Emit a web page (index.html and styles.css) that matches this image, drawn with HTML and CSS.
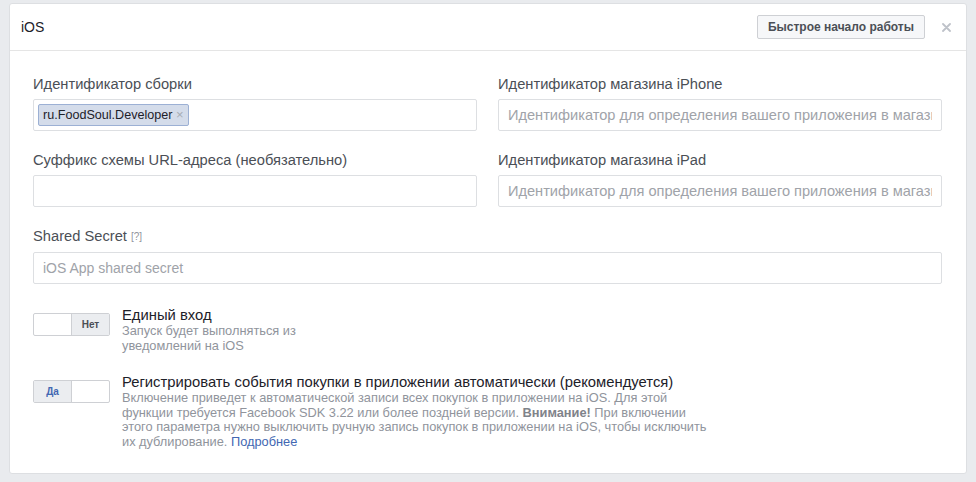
FILE: index.html
```html
<!DOCTYPE html>
<html lang="ru">
<head>
    <meta charset="UTF-8">
    <meta name="viewport" content="width=device-width, initial-scale=1.0">
    <title>iOS</title>
    <link rel="stylesheet" href="styles.css">
</head>
<body>

    <div class="card">
        <div class="card-header">
            <span class="card-title">iOS</span>
            <button class="btn">Быстрое начало работы</button>
            <span class="close">
                <svg width="9" height="9" viewBox="0 0 9 9">
                    <path d="M1 1 L8 8 M8 1 L1 8" stroke="#bec2c9" stroke-width="1.8" stroke-linecap="round"/>
                </svg>
            </span>
        </div>

        <div class="card-body">
            <div class="grid">
                <div class="field">
                    <label class="label">Идентификатор сборки</label>
                    <div class="input tags">
                        <span class="tag">ru.FoodSoul.Developer <span class="tag-x">×</span></span>
                    </div>
                </div>
                <div class="field">
                    <label class="label">Идентификатор магазина iPhone</label>
                    <input class="input" type="text" placeholder="Идентификатор для определения вашего приложения в магазине App Store">
                </div>
                <div class="field">
                    <label class="label">Суффикс схемы URL-адреса (необязательно)</label>
                    <input class="input" type="text">
                </div>
                <div class="field">
                    <label class="label">Идентификатор магазина iPad</label>
                    <input class="input" type="text" placeholder="Идентификатор для определения вашего приложения в магазине App Store">
                </div>
                <div class="field wide">
                    <label class="label">Shared Secret <span class="help">[?]</span></label>
                    <input class="input latin" type="text" placeholder="iOS App shared secret">
                </div>
            </div>

            <div class="option">
                <div class="toggle">
                    <span class="toggle-half"></span>
                    <span class="toggle-half on">Нет</span>
                </div>
                <div class="option-text short">
                    <div class="option-title">Единый вход</div>
                    <div class="option-desc">Запуск будет выполняться из уведомлений на iOS</div>
                </div>
            </div>

            <div class="option">
                <div class="toggle">
                    <span class="toggle-half on yes">Да</span>
                    <span class="toggle-half"></span>
                </div>
                <div class="option-text">
                    <div class="option-title">Регистрировать события покупки в приложении автоматически (рекомендуется)</div>
                    <div class="option-desc">Включение приведет к автоматической записи всех покупок в приложении на iOS. Для этой функции требуется Facebook SDK 3.22 или более поздней версии. <b>Внимание!</b> При включении этого параметра нужно выключить ручную запись покупок в приложении на iOS, чтобы исключить их дублирование. <a href="#">Подробнее</a></div>
                </div>
            </div>
        </div>
    </div>

</body>
</html>
```

FILE: styles.css
```css
body {
    margin: 0;
    padding: 3px 9px 9px;
    background: #e9ebee;
    font-family: "Liberation Sans", Arial, sans-serif;
    color: #1d2129;
}
.card {
    background: #fff;
    border: 1px solid #dddfe2;
    border-radius: 3px;
}
.card-header {
    display: flex;
    align-items: center;
    height: 46px;
    padding: 0 15px 0 11px;
    border-bottom: 1px solid #e5e5e5;
}
.card-title {
    flex: 1;
    font-size: 14px;
}
.btn {
    height: 24px;
    padding: 0 10px;
    font-family: inherit;
    font-size: 12px;
    font-weight: bold;
    color: #4b4f56;
    background: #f6f7f9;
    border: 1px solid #ced0d4;
    border-radius: 2px;
}
.close {
    display: flex;
    margin-left: 17px;
}
.card-body {
    padding: 24px 24px 24px 23px;
}
.grid {
    display: grid;
    grid-template-columns: 1fr 1fr;
    column-gap: 21px;
    row-gap: 20px;
}
.wide {
    grid-column: 1 / 3;
}
.label {
    display: block;
    font-size: 14.7px;
    line-height: 18px;
    color: #4b4f56;
    margin-bottom: 6px;
}
.help {
    font-size: 10px;
    color: #90949c;
    vertical-align: 1px;
}
.input {
    box-sizing: border-box;
    display: block;
    width: 100%;
    height: 32px;
    padding: 0 9px;
    font-family: inherit;
    font-size: 14.6px;
    color: #1d2129;
    border: 1px solid #dddfe2;
    border-radius: 2px;
    outline: none;
}
.input.latin {
    font-size: 14px;
}
.input::placeholder {
    color: #a0a3a9;
}
.tags {
    display: flex;
    align-items: center;
    padding: 0 4px;
}
.tag {
    height: 20px;
    line-height: 20px;
    padding: 0 4px;
    font-size: 12.6px;
    background: #d4dcea;
    border: 1px solid #9cb0d4;
    border-radius: 2px;
}
.tag-x {
    color: #a8adb5;
    font-size: 13px;
}
.option {
    display: flex;
    margin-top: 22px;
}
.option + .option {
    margin-top: 20px;
}
.toggle {
    display: flex;
    flex-shrink: 0;
    height: 21px;
    margin-top: 7px;
    margin-right: 12px;
    border: 1px solid #ced0d4;
    border-radius: 2px;
}
.toggle-half {
    width: 37px;
    font-size: 10px;
    font-weight: bold;
    line-height: 21px;
    text-align: center;
    color: #4b4f56;
}
.toggle-half + .toggle-half {
    border-left: 1px solid #ced0d4;
}
.toggle-half.on {
    background: #ebedf0;
}
.toggle-half.yes {
    color: #4267b2;
}
.option-text {
    width: 595px;
}
.option-text.short {
    width: 185px;
}
.option-title {
    font-size: 14.8px;
    line-height: 18px;
}
.option-desc {
    font-size: 12.8px;
    line-height: 14.5px;
    color: #90949c;
}
.option-desc b {
    color: #7f838a;
}
.option-desc a {
    color: #4267b2;
    text-decoration: none;
}
```
